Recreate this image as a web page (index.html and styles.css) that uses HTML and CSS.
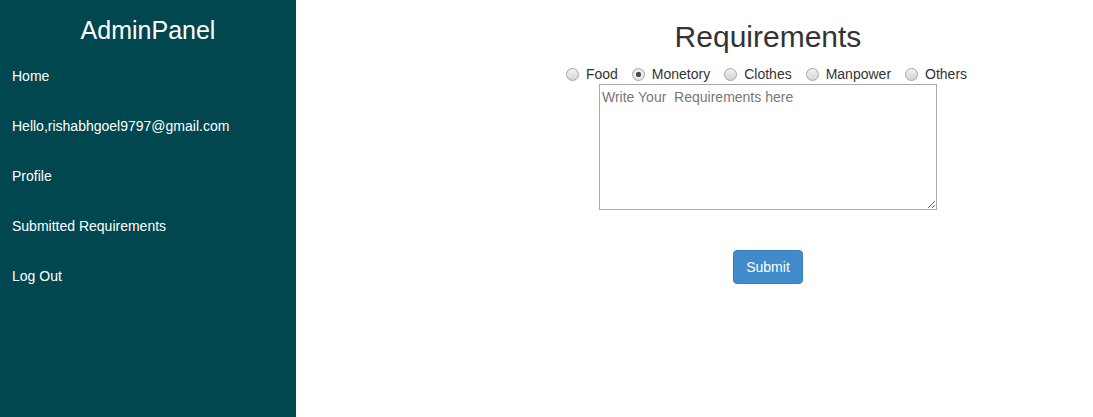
FILE: index.html
```html
<!DOCTYPE html>
<html>
<head>
<meta charset="utf-8">
<title>AdminPanel</title>
<link rel="stylesheet" href="styles.css">
</head>
<body>
<div class="layout">
  <nav class="sidebar">
    <h1 class="brand">AdminPanel</h1>
    <ul class="menu">
      <li><a href="#">Home</a></li>
      <li><a href="#">Hello,rishabhgoel9797@gmail.com</a></li>
      <li><a href="#">Profile</a></li>
      <li><a href="#">Submitted Requirements</a></li>
      <li><a href="#">Log Out</a></li>
    </ul>
  </nav>
  <main class="main">
    <form class="req-form">
      <h2 class="title">Requirements</h2>
      <div class="radios">
        <label class="opt"><input type="radio" name="type" class="radio"> Food</label>
        <label class="opt"><input type="radio" name="type" class="radio" checked> Monetory</label>
        <label class="opt"><input type="radio" name="type" class="radio"> Clothes</label>
        <label class="opt"><input type="radio" name="type" class="radio"> Manpower</label>
        <label class="opt"><input type="radio" name="type" class="radio"> Others</label>
      </div>
      <textarea class="area" placeholder="Write Your  Requirements here"></textarea>
      <button type="button" class="btn">Submit</button>
    </form>
  </main>
</div>
</body>
</html>
```
FILE: styles.css
```css
html, body {
  margin: 0;
  padding: 0;
  height: 100%;
}
body {
  font-family: "Liberation Sans", Arial, sans-serif;
  font-size: 14px;
  color: #333;
  background: #fff;
}
.layout {
  display: flex;
  min-height: 417px;
  height: 100%;
}
.sidebar {
  width: 296px;
  flex: none;
  background: #00474f;
  color: #fff;
}
.brand {
  margin: 0;
  padding-top: 15px;
  font-size: 25px;
  font-weight: normal;
  line-height: 30px;
  text-align: center;
}
.menu {
  list-style: none;
  margin: 0;
  padding: 23px 0 0 12px;
  display: flex;
  flex-direction: column;
  gap: 34px;
}
.menu li {
  line-height: 16px;
}
.menu a {
  color: #fff;
  text-decoration: none;
  font-size: 14px;
}
.main {
  flex: 1;
  padding-left: 147px;
}
.req-form {
  display: flex;
  flex-direction: column;
  align-items: center;
}
.title {
  margin: 20px 0 12px;
  font-size: 30px;
  font-weight: normal;
  line-height: 33px;
  color: #333;
}
.radios {
  display: flex;
  gap: 14px;
  line-height: 18px;
  padding-right: 3px;
}
.opt {
  display: flex;
  align-items: center;
  gap: 7px;
  color: #333;
}
.radio {
  appearance: none;
  -webkit-appearance: none;
  margin: 0;
  width: 13px;
  height: 13px;
  border-radius: 50%;
  border: 1px solid #a6a6a6;
  background: linear-gradient(#f2f2f2, #d4d4d4);
  box-sizing: border-box;
}
.radio:checked {
  background: radial-gradient(circle, #444 0, #555 2.5px, #eee 3px, #dcdcdc 100%);
}
.area {
  width: 338px;
  height: 126px;
  box-sizing: border-box;
  margin-top: 1px;
  border: 1px solid #a9a9a9;
  padding: 4px 2px 2px;
  font-family: "Liberation Sans", Arial, sans-serif;
  font-size: 14px;
  resize: both;
}
.area::placeholder {
  color: #777;
}
.btn {
  margin-top: 40px;
  height: 34px;
  padding: 6px 12px;
  font-family: "Liberation Sans", Arial, sans-serif;
  font-size: 14px;
  color: #fff;
  background: #428bca;
  border: 1px solid #357ebd;
  border-radius: 4px;
}
```
